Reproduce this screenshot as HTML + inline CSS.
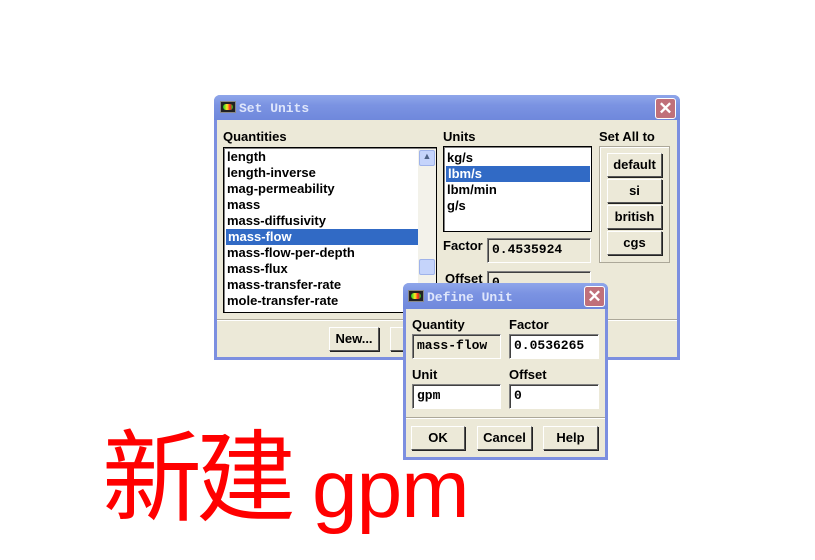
<!DOCTYPE html>
<html><head><meta charset="utf-8"><style>
*{margin:0;padding:0;box-sizing:border-box}
body{width:815px;height:536px;background:#fff;position:relative;overflow:hidden;font-family:"Liberation Sans",sans-serif;font-size:13px;font-weight:bold;color:#000}
.a{position:absolute}
.win{position:absolute;background:#ECE9D8;border:3px solid #7c8fe0;border-top:none;border-radius:6px 6px 0 0}
.title{position:absolute;left:-3px;right:-3px;top:0;background:linear-gradient(#8fa6ea,#7b93e2 40%,#6f88dc);border-radius:6px 6px 0 0}
.ttext{position:absolute;font-family:"Liberation Mono",monospace;color:#dfe6fb;font-size:13px;font-weight:bold}
.ico{position:absolute;width:16px;height:12px;background:#222;border:1px solid #888}
.ico:after{content:"";position:absolute;left:2px;top:2px;width:10px;height:6px;background:linear-gradient(90deg,#1c2 0,#fe2 40%,#f22 70%,#1c2);border-radius:3px}
.close{position:absolute;width:21px;height:21px;background:#c0707a;border:1px solid #fff;border-radius:3px;color:#fff;text-align:center;font-size:17px;line-height:19px;font-weight:bold}
.list{position:absolute;background:#fff;border:1px solid #000;box-shadow:inset 1px 1px 0 #808080}
.it{position:absolute;left:3px;height:16px;line-height:16px}
.sel{background:#316AC5;color:#fff}
.btn{position:absolute;background:#ECE9D8;border:1px solid;border-color:#fff #555 #555 #fff;box-shadow:1px 1px 0 #222;text-align:center;line-height:22px}
.fld{position:absolute;border:1px solid;border-color:#808080 #fff #fff #808080;box-shadow:inset 1px 1px 0 #404040;font-family:"Liberation Mono",monospace;font-weight:bold;padding-left:4px;line-height:22px;font-size:13px}
.hw{position:absolute;color:#f00;font-weight:normal}
</style></head><body>

<div class="win" style="left:214px;top:95px;width:466px;height:265px">
 <div class="title" style="height:25px"></div>
 <div class="ico" style="left:3px;top:6px"></div>
 <div class="ttext" style="left:22px;top:6px">Set Units</div>
 <div class="close" style="left:438px;top:3px">✕</div>
 <div class="a" style="left:6px;top:34px">Quantities</div>
 <div class="list" style="left:6px;top:52px;width:214px;height:166px">
  <div class="it" style="top:1px">length</div>
  <div class="it" style="top:17px">length-inverse</div>
  <div class="it" style="top:33px">mag-permeability</div>
  <div class="it" style="top:49px">mass</div>
  <div class="it" style="top:65px">mass-diffusivity</div>
  <div class="it sel" style="top:81px;left:2px;width:192px;padding-left:2px">mass-flow</div>
  <div class="it" style="top:97px">mass-flow-per-depth</div>
  <div class="it" style="top:113px">mass-flux</div>
  <div class="it" style="top:129px">mass-transfer-rate</div>
  <div class="it" style="top:145px">mole-transfer-rate</div>
  <div class="a" style="left:194px;top:1px;width:18px;height:162px;background:#f3f2ea"></div>
  <div class="a" style="left:195px;top:2px;width:16px;height:16px;background:#c5d4fb;border:1px solid #9fb3ea;border-radius:2px;font-size:9px;text-align:center;color:#4d6185">▲</div>
  <div class="a" style="left:195px;top:111px;width:16px;height:16px;background:#c5d4fb;border:1px solid #9fb3ea;border-radius:2px"></div>
 </div>
 <div class="a" style="left:0;top:224px;width:460px;border-top:1px solid #aca899;border-bottom:1px solid #fff"></div>
 <div class="btn" style="left:112px;top:232px;width:50px;height:24px">New...</div>
 <div class="btn" style="left:173px;top:232px;width:50px;height:24px"></div>

 <div class="a" style="left:226px;top:34px">Units</div>
 <div class="list" style="left:226px;top:51px;width:149px;height:86px">
  <div class="it" style="top:3px">kg/s</div>
  <div class="it sel" style="top:19px;left:2px;width:144px;padding-left:2px">lbm/s</div>
  <div class="it" style="top:35px">lbm/min</div>
  <div class="it" style="top:51px">g/s</div>
 </div>
 <div class="a" style="left:226px;top:143px">Factor</div>
 <div class="fld" style="left:270px;top:143px;width:104px;height:25px">0.4535924</div>
 <div class="a" style="left:228px;top:176px">Offset</div>
 <div class="fld" style="left:270px;top:176px;width:104px;height:25px">0</div>

 <div class="a" style="left:382px;top:34px">Set All to</div>
 <div class="a" style="left:382px;top:51px;width:71px;height:117px;border:1px solid #aca899;box-shadow:inset 1px 1px 0 #fff"></div>
 <div class="btn" style="left:390px;top:58px;width:55px;height:24px">default</div>
 <div class="btn" style="left:390px;top:84px;width:55px;height:24px">si</div>
 <div class="btn" style="left:390px;top:110px;width:55px;height:24px">british</div>
 <div class="btn" style="left:390px;top:136px;width:55px;height:24px">cgs</div>
</div>

<div class="win" style="left:403px;top:283px;width:205px;height:177px">
 <div class="title" style="height:26px"></div>
 <div class="ico" style="left:2px;top:7px"></div>
 <div class="ttext" style="left:21px;top:7px">Define Unit</div>
 <div class="close" style="left:178px;top:3px">✕</div>
 <div class="a" style="left:6px;top:34px">Quantity</div>
 <div class="fld" style="left:6px;top:51px;width:89px;height:25px">mass-flow</div>
 <div class="a" style="left:103px;top:34px">Factor</div>
 <div class="fld" style="left:103px;top:51px;width:90px;height:25px;background:#fff">0.0536265</div>
 <div class="a" style="left:6px;top:84px">Unit</div>
 <div class="fld" style="left:6px;top:101px;width:89px;height:25px;background:#fff">gpm</div>
 <div class="a" style="left:103px;top:84px">Offset</div>
 <div class="fld" style="left:103px;top:101px;width:90px;height:25px;background:#fff">0</div>
 <div class="a" style="left:0;top:134px;width:199px;border-top:1px solid #aca899;border-bottom:1px solid #fff"></div>
 <div class="btn" style="left:5px;top:143px;width:54px;height:24px">OK</div>
 <div class="btn" style="left:71px;top:143px;width:55px;height:24px">Cancel</div>
 <div class="btn" style="left:137px;top:143px;width:55px;height:24px">Help</div>
</div>

<div class="hw" style="left:102px;top:400px;font-size:100px;line-height:140px;font-family:'Noto Sans CJK SC',sans-serif;letter-spacing:-6px">新建</div>
<div class="hw" style="left:312px;top:420px;font-size:82px;line-height:140px;font-family:'Liberation Sans',sans-serif;letter-spacing:-1px">gpm</div>
</body></html>
